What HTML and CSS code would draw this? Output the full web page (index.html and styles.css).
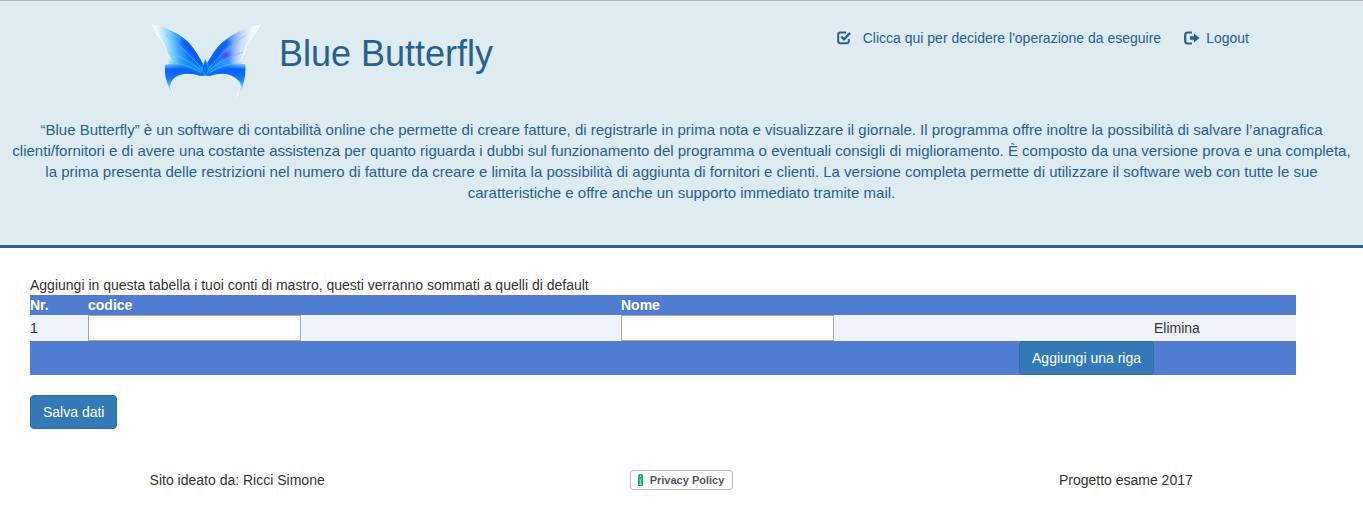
FILE: index.html
```html
<!DOCTYPE html>
<html lang="it">
<head>
<meta charset="utf-8">
<title>Blue Butterfly</title>
<link rel="stylesheet" href="styles.css">
</head>
<body>
<header class="site-header">
  <div class="header-top">
    <div class="brand">
      <svg class="logo" viewBox="45 60 360 240" role="img" aria-label="Farfalla blu">
        <defs>
          <linearGradient id="wing" gradientUnits="userSpaceOnUse" x1="88" y1="135" x2="170" y2="122">
            <stop offset="0" stop-color="#eaf8fc"/>
            <stop offset=".3" stop-color="#a5e0f8"/>
            <stop offset=".65" stop-color="#41a9fb"/>
            <stop offset="1" stop-color="#1574fd"/>
          </linearGradient>
          <linearGradient id="wing-right" gradientUnits="userSpaceOnUse" x1="360" y1="135" x2="268" y2="122">
            <stop offset="0" stop-color="#f0f6fd"/>
            <stop offset=".3" stop-color="#cdd9fb"/>
            <stop offset=".62" stop-color="#6a9cf8"/>
            <stop offset="1" stop-color="#1b78fd"/>
          </linearGradient>
          <linearGradient id="tail" gradientUnits="userSpaceOnUse" x1="0" y1="185" x2="0" y2="290">
            <stop offset="0" stop-color="#3db4fb" stop-opacity=".3"/>
            <stop offset=".22" stop-color="#0568ff"/>
            <stop offset=".5" stop-color="#1678ff"/>
            <stop offset=".76" stop-color="#94d4fa"/>
            <stop offset="1" stop-color="#f6fcff"/>
          </linearGradient>
          <filter id="soft" x="-10%" y="-10%" width="120%" height="120%"><feGaussianBlur stdDeviation="2"/></filter>
          <filter id="glow" x="-50%" y="-50%" width="200%" height="200%"><feGaussianBlur stdDeviation="6"/></filter>
          <clipPath id="shape">
            <path d="M66 72C112 84 150 101 177 128C195 148 208 172 218 190L226 226C182 218 156 219 141 229C126 238 121 248 121 260C107 241 103 216 105 194L118 185L108 154L94 121Z"/>
            <path d="M392 73C347 82 306 101 275 129C254 149 241 173 231 190L225 226C269 218 293 219 308 229C324 238 332 248 333 259C344 241 348 216 346 193L333 185L345 153L360 122Z"/>
          </clipPath>
        </defs>
        <g filter="url(#soft)">
          <path fill="url(#wing)" d="M66 72C112 84 150 101 177 128C195 148 208 172 218 190L226 226C195 222 160 214 112 201L118 185C115 174 115 162 108 154L104 140L94 121L78 101Z"/>
          <path fill="url(#wing-right)" d="M392 73C347 82 306 101 275 129C254 149 241 173 231 190L225 226C258 222 290 214 339 201L333 185C331 174 336 162 345 153L348 139L360 122L376 99Z"/>
          <path fill="url(#tail)" d="M105 194C137 187 181 197 219 218L224 227L211 228C182 218 156 219 141 229C126 238 121 248 121 260L133 290L119 267C107 241 103 216 105 194Z"/>
          <path fill="url(#tail)" d="M346 193C314 186 270 197 232 218L227 227L240 228C269 218 293 219 308 229C324 238 332 248 333 259L319 291L336 267C344 241 348 216 346 193Z"/>
        </g>
        <g clip-path="url(#shape)">
          <g filter="url(#glow)">
            <path fill="none" stroke="#0054fb" stroke-width="16" d="M155 122C180 140 200 170 216 205M297 122C272 142 252 170 236 205"/>
            <ellipse cx="288" cy="167" rx="16" ry="8" fill="#3d36ee" transform="rotate(-30 288 167)"/>
            <path fill="none" stroke="#005cff" stroke-width="13" d="M116 216Q150 203 212 219M336 216Q302 203 240 219"/>
            <path fill="none" stroke="#1c94fc" stroke-width="12" d="M150 186L215 210M302 186L237 210"/>
          </g>
          <g fill="none" stroke="#3ad2fb" stroke-width="3" opacity=".6" filter="url(#soft)">
            <path d="M217 208C180 164 142 130 105 104M216 213C179 183 148 167 115 157M214 218C178 198 149 190 116 188"/>
            <path d="M234 208C271 164 308 130 350 104M235 213C272 183 303 167 338 157M237 218C273 198 302 190 337 188"/>
          </g>
        </g>
        <g fill="none" stroke="#f8fdff" stroke-width="3" filter="url(#soft)">
          <path d="M66 72L79 101L95 122L105 140L109 155L120 178M121 259L133 290M392 73L376 99L360 122L348 139L345 153L334 178M333 259L319 291"/>
        </g>
        <path fill="#0b73ef" stroke="#20a8ff" stroke-width="2" d="M226 179L233 195L235 213L228 227L220 217L217 202Z"/>
        <path fill="none" stroke="#0b4ebf" stroke-width="2" d="M222 196V216M230 196V216"/>
      </svg>
      <h1 class="brand-name">Blue Butterfly</h1>
    </div>
    <nav class="nav">
      <a class="nav-link nav-link-wide" href="#">
        <svg class="icon" viewBox="0 0 14 14" aria-hidden="true"><path d="M9 1.5H3.5Q1.2 1.5 1.2 3.8V10Q1.2 12.3 3.5 12.3H9.5Q11.8 12.3 11.8 10V8" fill="none" stroke="currentColor" stroke-width="2"/><path d="M4.3 5.7L7 8.4L13 2" fill="none" stroke="currentColor" stroke-width="2.4"/></svg>
        <span>Clicca qui per decidere l'operazione da eseguire</span>
      </a>
      <a class="nav-link" href="#">
        <svg class="icon icon-logout" viewBox="0 0 16 14" aria-hidden="true"><path d="M8 1.5H4Q1.2 1.5 1.2 4V10Q1.2 12.5 4 12.5H8" fill="none" stroke="currentColor" stroke-width="2.2"/><path d="M6 5.2H10V2.6L15.5 7L10 11.4V8.8H6Z" fill="currentColor"/></svg>
        <span>Logout</span>
      </a>
    </nav>
  </div>
  <p class="intro">“Blue Butterfly” è un software di contabilità online che permette di creare fatture, di registrarle in prima nota e visualizzare il giornale. Il programma offre inoltre la possibilità di salvare l’anagrafica clienti/fornitori e di avere una costante assistenza per quanto riguarda i dubbi sul funzionamento del programma o eventuali consigli di miglioramento. È composto da una versione prova e una completa, la prima presenta delle restrizioni nel numero di fatture da creare e limita la possibilità di aggiunta di fornitori e clienti. La versione completa permette di utilizzare il software web con tutte le sue caratteristiche e offre anche un supporto immediato tramite mail.</p>
</header>
<main class="content">
  <form>
    <p class="lead">Aggiungi in questa tabella i tuoi conti di mastro, questi verranno sommati a quelli di default</p>
    <table class="accounts">
      <colgroup><col class="col-nr"><col class="col-field"><col class="col-field"><col class="col-action"></colgroup>
      <thead>
        <tr><th>Nr.</th><th id="h-code">codice</th><th id="h-name">Nome</th><th></th></tr>
      </thead>
      <tbody>
        <tr>
          <td>1</td>
          <td><input class="field" type="text" aria-labelledby="h-code"></td>
          <td><input class="field" type="text" aria-labelledby="h-name"></td>
          <td>Elimina</td>
        </tr>
      </tbody>
      <tfoot>
        <tr><td class="add-cell" colspan="3"><button class="btn" type="button">Aggiungi una riga</button></td><td></td></tr>
      </tfoot>
    </table>
    <button class="btn" type="submit">Salva dati</button>
  </form>
</main>
<footer class="footer">
  <div>Sito ideato da: Ricci Simone</div>
  <div>
    <a class="policy" href="#">
      <svg class="policy-icon" viewBox="0 0 5 12" aria-hidden="true"><path d="M1 0H4L5 1V12H0V1Z" fill="#1cb27e"/><path d="M2.500 1.500V3M1.500 5.500H2.500V10.500M1 10.500H4" fill="none" stroke="#8fdabd" stroke-width="1"/></svg>
      <span>Privacy Policy</span>
    </a>
  </div>
  <div>Progetto esame 2017</div>
</footer>
</body>
</html>
```

FILE: styles.css
```css
* { box-sizing: border-box; }

body {
  margin: 0;
  font: 14px/20px "Liberation Sans", Arial, sans-serif;
  color: #333;
  background: #fff;
}

a { color: inherit; text-decoration: none; }

.site-header {
  padding: 19px 8px 42px;
  color: #286090;
  background: #deebf1;
  border-top: 1px solid #b5b5b9;
  border-bottom: 3px solid #236192;
}

.header-top {
  display: flex;
  justify-content: space-between;
  align-items: flex-start;
  padding: 0 106px 0 137px;
}

.brand { display: flex; gap: 14px; }

.logo { width: 120px; height: 80px; }

.brand-name {
  margin: 14px 0 0;
  font-size: 36px;
  line-height: 40px;
  font-weight: 400;
}

.nav { display: flex; gap: 23px; padding-top: 8px; }

.nav-link { display: flex; align-items: center; gap: 6px; }

.nav-link-wide { gap: 12px; }

.icon { width: 14px; height: 14px; }

.icon-logout { width: 16px; }

.intro {
  margin: 19px 0 0;
  font-size: 15px;
  line-height: 21px;
  text-align: center;
}

.content { padding: 27px 67px 0 30px; }

.lead { margin: 0; }

.accounts {
  width: 100%;
  margin-bottom: 20px;
  table-layout: fixed;
  border-collapse: collapse;
}

.col-nr { width: 58px; }

.col-action { width: 142px; }

th, td { padding: 0; text-align: left; }

thead, tfoot { color: #fff; background: #507cd1; }

tbody { background: #eff3fb; }

.field {
  display: block;
  width: 213px;
  height: 26px;
  padding: 1px 2px;
  font: inherit;
  background: #fff;
  border: 1px solid #a9a9a9;
}

.add-cell { text-align: right; }

.btn {
  display: inline-block;
  padding: 6px 12px;
  font: inherit;
  color: #fff;
  vertical-align: top;
  background: #337ab7;
  border: 1px solid #2e6da4;
  border-radius: 4px;
}

.footer {
  display: grid;
  grid-template-columns: repeat(3, 1fr);
  padding: 41px 15px 17px;
  text-align: center;
}

.policy {
  display: inline-flex;
  align-items: center;
  gap: 7px;
  height: 20px;
  padding: 0 8px 0 7px;
  font-size: 11px;
  font-weight: 700;
  color: #575757;
  vertical-align: top;
  border: 1px solid #bbb;
  border-radius: 3px;
}

.policy-icon { width: 5px; height: 12px; }
```
